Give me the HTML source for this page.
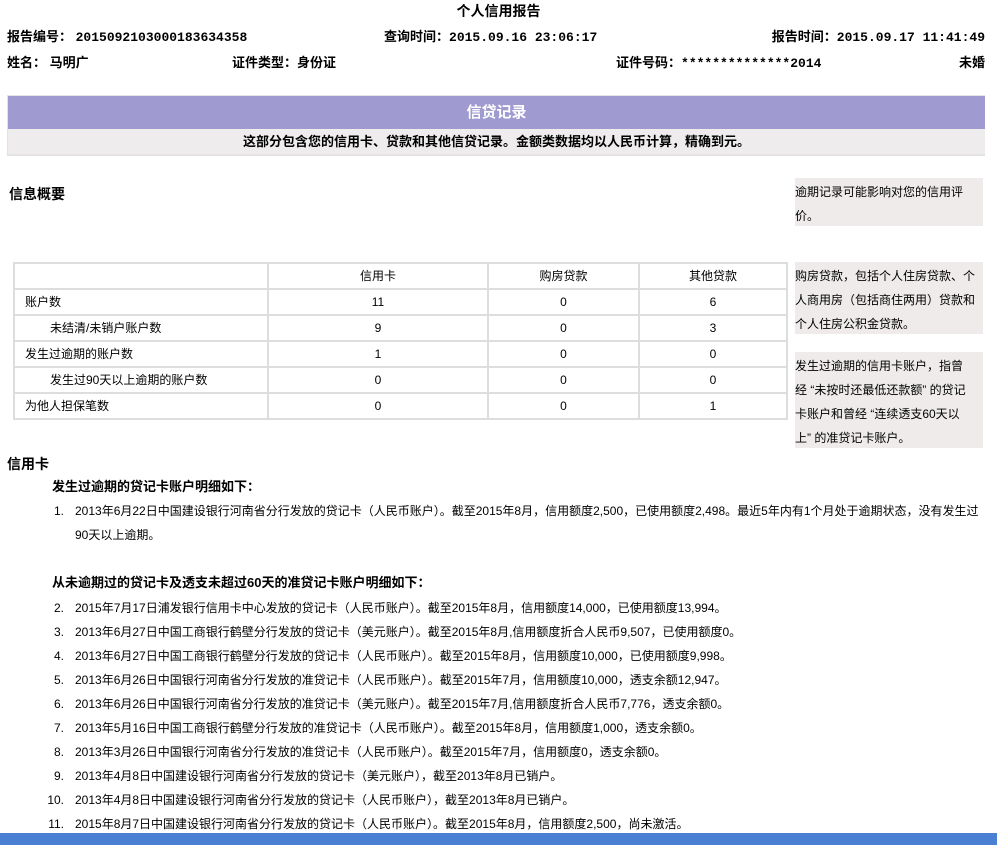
<!DOCTYPE html>
<html><head><meta charset="utf-8"><style>
*{margin:0;padding:0;box-sizing:border-box}
body{width:997px;height:845px;overflow:hidden;background:#fff;position:relative;font-family:"Liberation Sans","Noto Sans CJK SC","WenQuanYi Zen Hei",sans-serif;font-size:12px;color:#000;line-height:16px}
.a{position:absolute;white-space:nowrap}
.b{font-weight:bold;font-size:13px}
.mono{font-family:"Liberation Mono","Noto Sans CJK SC",monospace}
.note{position:absolute;left:795px;width:188px;background:#eeebea;line-height:24px;padding:2px 0 0 0;white-space:nowrap;font-size:12px}
table{position:absolute;left:13px;top:262px;border-collapse:collapse;width:775px;border:2px solid #ddd}
td{border:2px solid #ddd;height:26px;text-align:center;font-size:12px;padding:0}
td.l{text-align:left;padding-left:10px}
td.l2{text-align:left;padding-left:35px}
.n{position:absolute;width:60px;text-align:right;left:4px;line-height:16px}
</style></head><body>
<div class="a b" style="left:0;width:997px;text-align:center;top:3px;font-size:14px">个人信用报告</div>
<div class="a b" style="left:7px;top:29px">报告编号： <span class="mono">2015092103000183634358</span></div>
<div class="a b" style="left:384px;top:29px">查询时间：<span class="mono">2015.09.16 23:06:17</span></div>
<div class="a b" style="right:12px;top:29px">报告时间：<span class="mono">2015.09.17 11:41:49</span></div>
<div class="a b" style="left:7px;top:55px">姓名： 马明广</div>
<div class="a b" style="left:232px;top:55px">证件类型：身份证</div>
<div class="a b" style="left:616px;top:55px">证件号码：<span class="mono">**************2014</span></div>
<div class="a b" style="right:12px;top:55px">未婚</div>
<div class="a" style="left:7px;top:95px;width:978px;height:61px;background:#e4e2e2"></div>
<div class="a" style="left:8px;top:96px;width:977px;height:33px;background:#9f9bd0;color:#fff;text-align:center;line-height:33px;font-size:15px;font-weight:bold">信贷记录</div>
<div class="a" style="left:8px;top:129px;width:977px;height:25px;background:#eeecec;text-align:center;line-height:25px;font-weight:bold;font-size:13px">这部分包含您的信用卡、贷款和其他信贷记录。金额类数据均以人民币计算，精确到元。</div>
<div class="a b" style="left:9px;top:186px;font-size:14px">信息概要</div>
<div class="note" style="top:178px;height:48px">逾期记录可能影响对您的信用评<br>价。</div>
<div class="note" style="top:262px;height:72px">购房贷款，包括个人住房贷款、个<br>人商用房（包括商住两用）贷款和<br>个人住房公积金贷款。</div>
<div class="note" style="top:352px;height:96px">发生过逾期的信用卡账户，指曾<br>经 “未按时还最低还款额” 的贷记<br>卡账户和曾经 “连续透支60天以<br>上” 的准贷记卡账户。</div>
<table>
<tr><td style="width:254px"></td><td style="width:220px">信用卡</td><td style="width:151px">购房贷款</td><td>其他贷款</td></tr>
<tr><td class="l">账户数</td><td>11</td><td>0</td><td>6</td></tr>
<tr><td class="l2">未结清/未销户账户数</td><td>9</td><td>0</td><td>3</td></tr>
<tr><td class="l">发生过逾期的账户数</td><td>1</td><td>0</td><td>0</td></tr>
<tr><td class="l2">发生过90天以上逾期的账户数</td><td>0</td><td>0</td><td>0</td></tr>
<tr><td class="l">为他人担保笔数</td><td>0</td><td>0</td><td>1</td></tr>
</table>
<div class="a b" style="left:7px;top:456px;font-size:14px">信用卡</div>
<div class="a b" style="left:52px;top:479px">发生过逾期的贷记卡账户明细如下：</div>
<div class="n" style="top:503px">1.</div>
<div class="a" style="left:75px;top:503px">2013年6月22日中国建设银行河南省分行发放的贷记卡（人民币账户）。截至2015年8月，信用额度2,500，已使用额度2,498。最近5年内有1个月处于逾期状态，没有发生过</div>
<div class="a" style="left:75px;top:527px">90天以上逾期。</div>
<div class="a b" style="left:52px;top:575px">从未逾期过的贷记卡及透支未超过60天的准贷记卡账户明细如下：</div>
<div class="n" style="top:600px">2.</div><div class="a" style="left:75px;top:600px">2015年7月17日浦发银行信用卡中心发放的贷记卡（人民币账户）。截至2015年8月，信用额度14,000，已使用额度13,994。</div>
<div class="n" style="top:624px">3.</div><div class="a" style="left:75px;top:624px">2013年6月27日中国工商银行鹤壁分行发放的贷记卡（美元账户）。截至2015年8月,信用额度折合人民币9,507，已使用额度0。</div>
<div class="n" style="top:648px">4.</div><div class="a" style="left:75px;top:648px">2013年6月27日中国工商银行鹤壁分行发放的贷记卡（人民币账户）。截至2015年8月，信用额度10,000，已使用额度9,998。</div>
<div class="n" style="top:672px">5.</div><div class="a" style="left:75px;top:672px">2013年6月26日中国银行河南省分行发放的准贷记卡（人民币账户）。截至2015年7月，信用额度10,000，透支余额12,947。</div>
<div class="n" style="top:696px">6.</div><div class="a" style="left:75px;top:696px">2013年6月26日中国银行河南省分行发放的准贷记卡（美元账户）。截至2015年7月,信用额度折合人民币7,776，透支余额0。</div>
<div class="n" style="top:720px">7.</div><div class="a" style="left:75px;top:720px">2013年5月16日中国工商银行鹤壁分行发放的准贷记卡（人民币账户）。截至2015年8月，信用额度1,000，透支余额0。</div>
<div class="n" style="top:744px">8.</div><div class="a" style="left:75px;top:744px">2013年3月26日中国银行河南省分行发放的准贷记卡（人民币账户）。截至2015年7月，信用额度0，透支余额0。</div>
<div class="n" style="top:768px">9.</div><div class="a" style="left:75px;top:768px">2013年4月8日中国建设银行河南省分行发放的贷记卡（美元账户），截至2013年8月已销户。</div>
<div class="n" style="top:792px">10.</div><div class="a" style="left:75px;top:792px">2013年4月8日中国建设银行河南省分行发放的贷记卡（人民币账户），截至2013年8月已销户。</div>
<div class="n" style="top:816px">11.</div><div class="a" style="left:75px;top:816px">2015年8月7日中国建设银行河南省分行发放的贷记卡（人民币账户）。截至2015年8月，信用额度2,500，尚未激活。</div>
<div class="a" style="left:0;top:833px;width:997px;height:12px;background:#4a80d4"></div>
</body></html>
